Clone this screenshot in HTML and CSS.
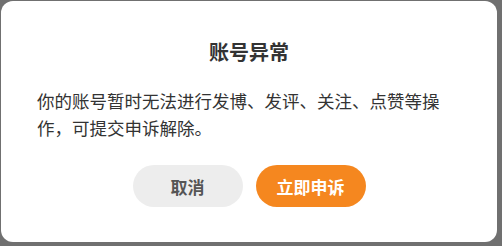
FILE: index.html
```html
<!DOCTYPE html>
<html lang="zh">
<head>
<meta charset="utf-8">
<link rel="stylesheet" href="styles.css">
</head>
<body>
<div class="overlay">
  <div class="dialog">
    <h2 class="title">账号异常</h2>
    <p class="message">你的账号暂时无法进行发博、发评、关注、点赞等操作，可提交申诉解除。</p>
    <div class="actions">
      <button class="btn btn-cancel">取消</button>
      <button class="btn btn-primary">立即申诉</button>
    </div>
  </div>
</div>
</body>
</html>
```
FILE: styles.css
```css
html, body {
  margin: 0;
  padding: 0;
  background: #707070;
  font-family: "Noto Sans CJK SC", "Noto Sans", sans-serif;
}
.overlay {
  width: 502px;
  height: 246px;
  padding: 1px 0 0 1px;
  box-sizing: border-box;
}
.dialog {
  width: 496px;
  height: 241px;
  background: #fff;
  border-radius: 12px;
  box-sizing: border-box;
  padding: 37px 0 0 36px;
  display: flex;
  flex-direction: column;
}
.title {
  margin: 0;
  margin-right: 36px;
  font-size: 20px;
  line-height: 28px;
  font-weight: bold;
  color: #333;
  text-align: center;
}
.message {
  margin: 21px 0 0 0;
  width: 418px;
  font-size: 17.5px;
  line-height: 27px;
  color: #333;
}
.actions {
  margin-top: 24px;
  margin-right: 36px;
  display: flex;
  justify-content: center;
  gap: 13px;
}
.btn {
  width: 110px;
  height: 42px;
  border: none;
  border-radius: 21px;
  font-family: inherit;
  font-size: 17px;
  font-weight: bold;
  padding: 0;
}
.btn-cancel {
  background: #ededed;
  color: #555;
}
.btn-primary {
  background: #f5871f;
  color: #fff;
}
```
